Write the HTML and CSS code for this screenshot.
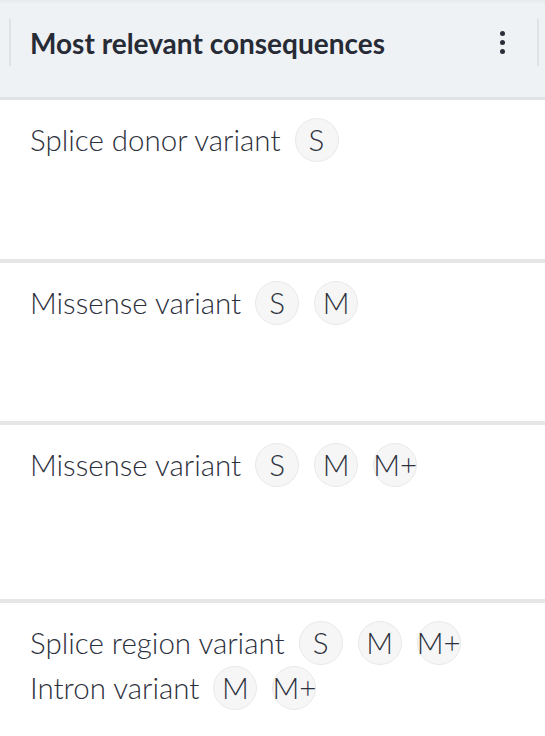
FILE: index.html
```html
<!DOCTYPE html>
<html>
<head>
<meta charset="utf-8">
<link rel="stylesheet" href="styles.css">
</head>
<body>
<div class="panel">
  <div class="header">
    <div class="header-cell">
      <h1 class="title">Most relevant consequences</h1>
      <button class="kebab" aria-label="More">
        <span class="dot"></span><span class="dot"></span><span class="dot"></span>
      </button>
    </div>
  </div>
  <div class="row row-1">
    <div class="line"><span class="label">Splice donor variant</span><span class="badge">S</span></div>
  </div>
  <div class="row row-2">
    <div class="line"><span class="label">Missense variant</span><span class="badge">S</span><span class="badge">M</span></div>
  </div>
  <div class="row row-3">
    <div class="line"><span class="label">Missense variant</span><span class="badge">S</span><span class="badge">M</span><span class="badge">M+</span></div>
  </div>
  <div class="row row-4">
    <div class="line"><span class="label">Splice region variant</span><span class="badge">S</span><span class="badge">M</span><span class="badge">M+</span></div>
    <div class="line"><span class="label">Intron variant</span><span class="badge">M</span><span class="badge">M+</span></div>
  </div>
</div>
</body>
</html>
```

FILE: styles.css
```css
html, body {
  margin: 0;
  padding: 0;
  background: #ffffff;
}
body {
  font-family: Lato, "Liberation Sans", sans-serif;
  color: #2c303c;
  width: 545px;
  height: 736px;
  overflow: hidden;
}
* {
  box-sizing: border-box;
}
.panel {
  display: flex;
  flex-direction: column;
}
.header {
  background: linear-gradient(#e6e9eb 0, #eff2f4 4px, #eff2f4 100%);
  height: 100px;
  border-bottom: 3px solid #e2e3e4;
  padding-top: 19px;
}
.header-cell {
  margin: 0 6px 0 9px;
  height: 47px;
  border-left: 2px solid #e0e2e4;
  border-right: 2px solid #e0e2e4;
  display: flex;
  align-items: center;
  justify-content: space-between;
  padding: 0 32px 0 19px;
}
.title {
  margin: 0;
  font-size: 28px;
  font-weight: 700;
  color: #272b36;
}
.kebab {
  border: 0;
  background: none;
  padding: 0;
  display: flex;
  flex-direction: column;
  gap: 3.5px;
  align-items: center;
}
.dot {
  width: 5.5px;
  height: 5.5px;
  border-radius: 50%;
  background: #2a2e39;
}
.row {
  padding: 17px 0 0 30px;
  border-bottom: 4px solid #e6e6e6;
}
.row-1 { height: 163px; }
.row-2 { height: 162px; }
.row-3 { height: 178px; }
.row-4 { border-bottom: 0; }
.line {
  display: flex;
  align-items: center;
  gap: 14px;
  height: 45px;
}
.label {
  font-size: 29.5px;
  font-weight: 300;
}
.badge {
  width: 44px;
  height: 44px;
  border-radius: 50%;
  background: #f6f6f6;
  border: 1.5px solid #e9e9e9;
  display: flex;
  align-items: center;
  justify-content: center;
  font-size: 29.5px;
  font-weight: 300;
  margin-right: 1px;
}
```
